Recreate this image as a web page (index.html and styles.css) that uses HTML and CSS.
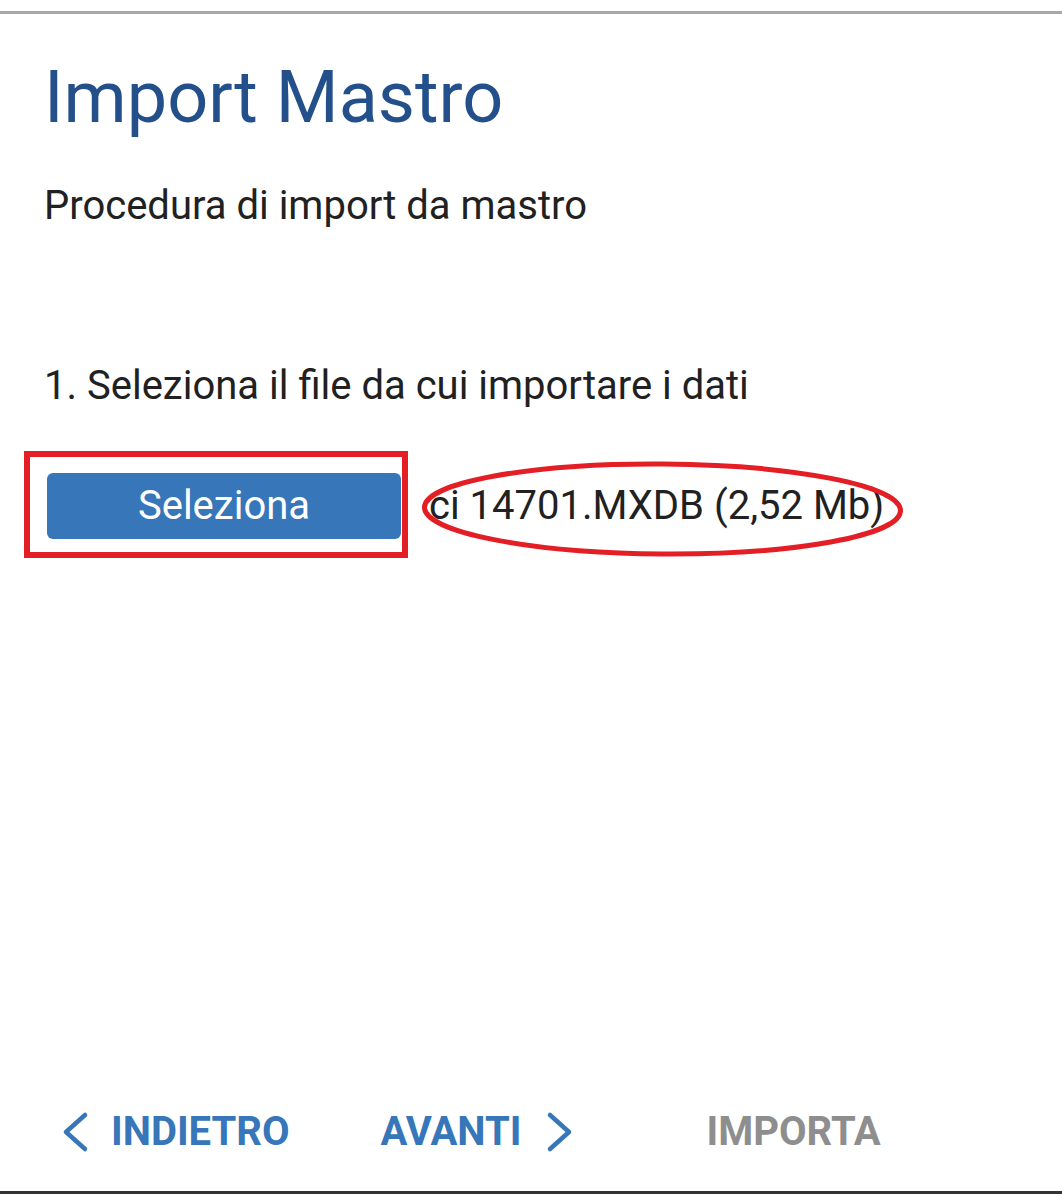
FILE: index.html
```html
<!DOCTYPE html>
<html lang="it">
<head>
<meta charset="utf-8">
<title>Import Mastro</title>
<link rel="stylesheet" href="styles.css">
</head>
<body>
<div class="page">
  <div class="topbar"></div>
  <main class="content">
    <h1 class="title">Import Mastro</h1>
    <p class="subtitle">Procedura di import da mastro</p>
    <p class="step">1. Seleziona il file da cui importare i dati</p>
    <div class="file-row">
      <div class="select-wrap">
        <button class="select-btn" type="button">Seleziona</button>
        <span class="mark-rect"></span>
      </div>
      <div class="file-wrap">
        <span class="file-name">ci 14701.MXDB (2,52 Mb)</span>
        <svg class="mark-ellipse" width="500" height="104" viewBox="0 0 500 104" aria-hidden="true">
          <ellipse cx="250.5" cy="52" rx="238" ry="45" fill="none" stroke="#e31e24" stroke-width="5" transform="rotate(0.4 250.5 52)"/>
        </svg>
      </div>
    </div>
  </main>
  <footer class="nav">
    <button class="nav-btn nav-back" type="button">
      <svg width="28" height="42" viewBox="0 0 28 42" aria-hidden="true"><path d="M23 4 L4 21 L23 38" fill="none" stroke="currentColor" stroke-width="4.5" stroke-linecap="round" stroke-linejoin="round"/></svg>
      <span>INDIETRO</span>
    </button>
    <button class="nav-btn nav-next" type="button">
      <span>AVANTI</span>
      <svg width="28" height="42" viewBox="0 0 28 42" aria-hidden="true"><path d="M5 4 L24 21 L5 38" fill="none" stroke="currentColor" stroke-width="4.5" stroke-linecap="round" stroke-linejoin="round"/></svg>
    </button>
    <button class="nav-btn nav-import" type="button"><span>IMPORTA</span></button>
  </footer>
</div>
</body>
</html>
```
FILE: styles.css
```css
html, body {
  margin: 0;
  padding: 0;
  background: #ffffff;
}

body {
  font-family: Roboto, "Liberation Sans", Arial, sans-serif;
  color: #212121;
}

.page {
  height: 100vh;
  box-sizing: border-box;
  padding-top: 11px;
  display: flex;
  flex-direction: column;
  border-bottom: 3px solid #333333;
}

.topbar {
  height: 3px;
  background: #a8a8a8;
  flex: none;
}

.content {
  padding-left: 44px;
  flex: 1;
}

.title {
  margin: 48px 0 0;
  font-size: 72px;
  line-height: 72px;
  font-weight: 400;
  color: #234f8b;
}

.subtitle {
  margin: 52px 0 0;
  font-size: 40px;
  line-height: 40px;
}

.step {
  margin: 140px 0 0;
  font-size: 40px;
  line-height: 40px;
}

.file-row {
  margin-top: 67px;
  display: flex;
  align-items: center;
}

.select-wrap {
  position: relative;
  margin-left: 3px;
}

.select-btn {
  display: block;
  width: 354px;
  height: 66px;
  border: 0;
  border-radius: 6px;
  background: #3676b9;
  color: #ffffff;
  font-family: inherit;
  font-size: 40px;
  line-height: 66px;
  padding: 0;
}

.mark-rect {
  position: absolute;
  left: -23px;
  top: -22px;
  width: 384px;
  height: 107px;
  box-sizing: border-box;
  border: 6px solid #e31e24;
}

.file-wrap {
  position: relative;
  margin-left: 28px;
}

.file-name {
  display: block;
  font-size: 40px;
  line-height: 40px;
  color: #212121;
}

.mark-ellipse {
  position: absolute;
  left: -17px;
  top: -29px;
}

.nav {
  flex: none;
  display: flex;
  align-items: center;
  padding: 0 0 38px 62px;
}

.nav-btn {
  display: flex;
  align-items: center;
  border: 0;
  background: none;
  padding: 0;
  font-family: inherit;
  font-size: 40px;
  line-height: 40px;
  font-weight: 700;
  color: #3676b9;
}

.nav-btn svg {
  display: block;
}

.nav-back {
  gap: 21px;
}

.nav-next {
  margin-left: 91px;
  gap: 23px;
}

.nav-import {
  margin-left: 134px;
  color: #8e8e8e;
}
```
